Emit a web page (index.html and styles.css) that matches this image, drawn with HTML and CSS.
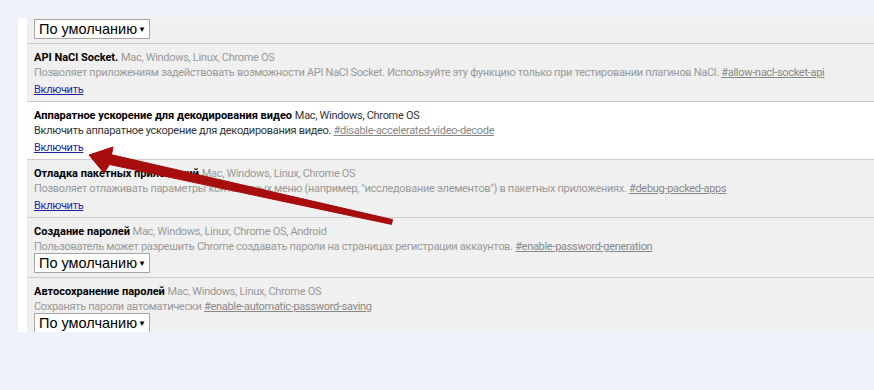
FILE: index.html
```html
<!DOCTYPE html>
<html lang="ru">
<head>
  <meta charset="UTF-8">
  <title>Эксперименты</title>
  <link rel="stylesheet" href="styles.css">
</head>
<body>
  <div class="page">
    <div class="panel">
      <div class="list">
        <div class="experiment first">
          <div class="select"><span>По умолчанию</span><span class="caret">▼</span></div>
        </div>

        <div class="experiment">
          <div class="title"><b>API NaCl Socket.</b> <span class="platforms">Mac, Windows, Linux, Chrome OS</span></div>
          <div class="desc">Позволяет приложениям задействовать возможности API NaCl Socket. Используйте эту функцию только при тестировании плагинов NaCl. <a class="hash" href="#allow-nacl-socket-api">#allow-nacl-socket-api</a></div>
          <a class="toggle" href="#">Включить</a>
        </div>

        <div class="experiment active">
          <div class="title"><b>Аппаратное ускорение для декодирования видео</b> <span class="platforms">Mac, Windows, Chrome OS</span></div>
          <div class="desc">Включить аппаратное ускорение для декодирования видео. <a class="hash" href="#disable-accelerated-video-decode">#disable-accelerated-video-decode</a></div>
          <a class="toggle" href="#">Включить</a>
        </div>

        <div class="experiment">
          <div class="title"><b>Отладка пакетных приложений</b> <span class="platforms">Mac, Windows, Linux, Chrome OS</span></div>
          <div class="desc">Позволяет отлаживать параметры контекстных меню (например, "исследование элементов") в пакетных приложениях. <a class="hash" href="#debug-packed-apps">#debug-packed-apps</a></div>
          <a class="toggle" href="#">Включить</a>
        </div>

        <div class="experiment with-select">
          <div class="title"><b>Создание паролей</b> <span class="platforms">Mac, Windows, Linux, Chrome OS, Android</span></div>
          <div class="desc">Пользователь может разрешить Chrome создавать пароли на страницах регистрации аккаунтов. <a class="hash" href="#enable-password-generation">#enable-password-generation</a></div>
          <div class="select"><span>По умолчанию</span><span class="caret">▼</span></div>
        </div>

        <div class="experiment with-select last">
          <div class="title"><b>Автосохранение паролей</b> <span class="platforms">Mac, Windows, Linux, Chrome OS</span></div>
          <div class="desc">Сохранять пароли автоматически <a class="hash" href="#enable-automatic-password-saving">#enable-automatic-password-saving</a></div>
          <div class="select"><span>По умолчанию</span><span class="caret">▼</span></div>
        </div>
      </div>
    </div>
  </div>

  <svg class="arrow" width="874" height="390" viewBox="0 0 874 390">
    <polygon fill="#a80d0d" stroke="#a80d0d" stroke-width="1" stroke-linejoin="round"
      points="89,155 113,147 111.5,154.7 392.5,219.6 391.5,224.4 109.5,164.5 104,173"/>
  </svg>
</body>
</html>
```

FILE: styles.css
```css
body {
  margin: 0;
  background: #eef2f9;
  font-family: Roboto, 'Open Sans', sans-serif;
  font-size: 11px;
  color: #000;
  position: relative;
}

.page {
  padding: 18px 0 0 18px;
}

.panel {
  background: #fff;
  padding-left: 9px;
  height: 314px;
  overflow: hidden;
}

.list {
  background: #f0f0f0;
  height: 100%;
}

.experiment {
  padding: 6px 7px 4px;
  border-top: 1px solid #cdcdcd;
  line-height: 15px;
  white-space: nowrap;
}

.experiment.first {
  border-top: none;
  padding: 1px 7px 4px;
}

.experiment.active {
  background: #fff;
}

.experiment.last {
  padding-bottom: 0;
}

.title b {
  font-weight: 700;
}

.platforms,
.desc,
.toggle {
  letter-spacing: -0.3px;
}

.platforms {
  color: #999;
}

.desc {
  color: #999;
}

.active .platforms,
.active .desc {
  color: #333;
}

.hash {
  color: #888;
  text-decoration: underline;
}

.toggle {
  display: inline-block;
  margin-top: 2px;
  color: #1f1fa5;
  text-decoration: underline;
}

.select {
  display: flex;
  align-items: center;
  justify-content: space-between;
  box-sizing: border-box;
  width: 116px;
  height: 20px;
  padding: 0 3px 0 4px;
  border: 1px solid #a6a6a6;
  background: #fff;
  font-family: 'Liberation Sans', Arial, sans-serif;
  font-size: 14.5px;
  color: #000;
}

.with-select .select {
  margin-top: -1px;
}

.caret {
  font-size: 8px;
}

.arrow {
  position: absolute;
  left: 0;
  top: 0;
  pointer-events: none;
}
```
